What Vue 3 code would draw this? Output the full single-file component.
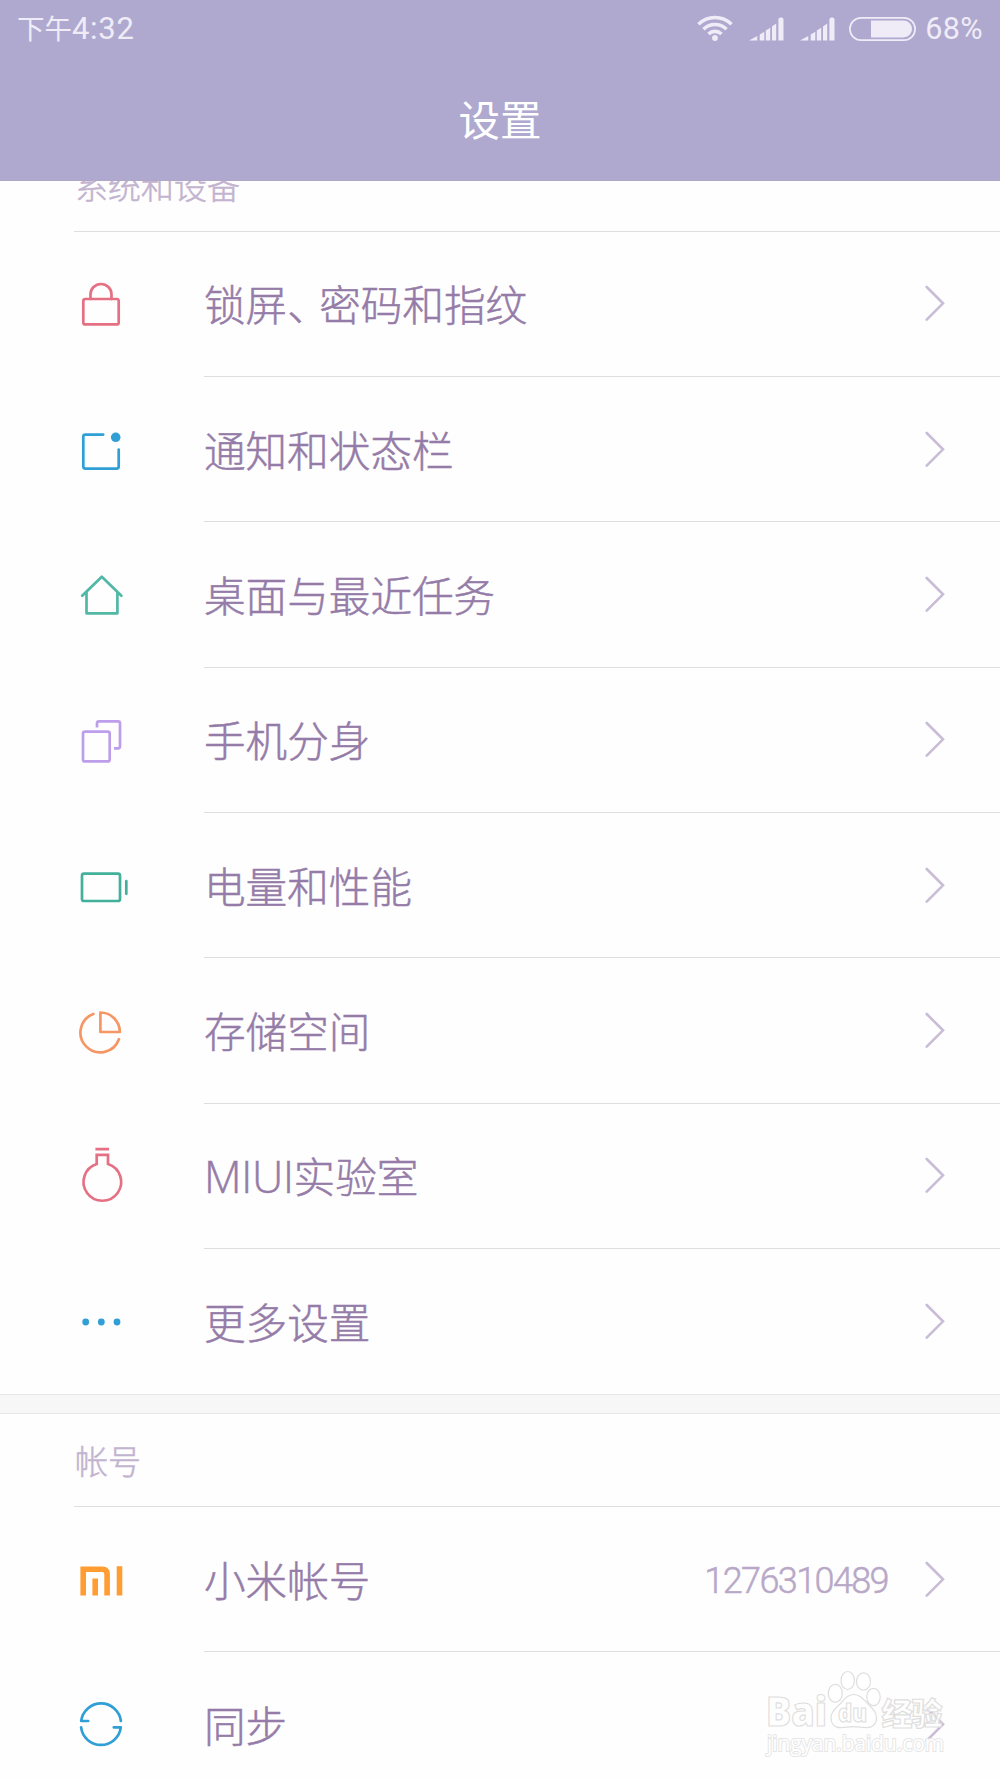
<script setup>
import { ref } from 'vue';

const deviceItems = ref([
  { icon: 'lock', before: '锁屏', pause: '、', title: '密码和指纹' },
  { icon: 'notify', title: '通知和状态栏' },
  { icon: 'home', title: '桌面与最近任务' },
  { icon: 'clone', title: '手机分身' },
  { icon: 'battery', title: '电量和性能' },
  { icon: 'storage', title: '存储空间' },
  { icon: 'lab', latin: 'MIUI', title: '实验室' },
  { icon: 'more', title: '更多设置' },
]);

const accountItems = ref([
  { icon: 'mi', title: '小米帐号', value: '1276310489' },
  { icon: 'sync', title: '同步' },
]);

const sections = [
  { name: '系统和设备', items: deviceItems },
  { name: '帐号', items: accountItems },
];
</script>

<template>
  <div class="screen">
    <header class="top">
      <div class="status-bar">
        <div class="clock"><span class="clock-period">下午</span>4:32</div>
        <div class="status-icons">
          <svg class="wifi" width="36" height="26" viewBox="0 0 36 26">
            <g fill="none" stroke="currentColor" stroke-width="3.6">
              <path d="M1.5 9.2a23.5 23.5 0 0 1 33 0" />
              <path d="M6.5 14.2a16.4 16.4 0 0 1 23 0" />
              <path d="M11.5 19a9.4 9.4 0 0 1 13 0" />
            </g>
            <circle cx="18" cy="23" r="2.9" fill="currentColor" />
          </svg>
          <svg v-for="n in 2" :key="n" class="signal" width="35" height="24" viewBox="0 0 35 24">
            <path
              d="M0 23.5 8.3 19v4.5zM10.7 17.6l4.6-2.8v8.7h-4.6zM16.8 13.6l4.4-2.9v12.8h-4.4zM23 9.4l4.2-2.9v17H23zM29.4 5V2.6q0-2.1 2.1-2.1h.9q2.1 0 2.1 2.1v20.9h-5.1z"
              fill="currentColor"
            />
          </svg>
          <svg class="charge" width="67" height="24" viewBox="0 0 67 24">
            <rect x=".9" y=".9" width="65.2" height="22.2" rx="11.1" fill="none" stroke="currentColor" stroke-width="1.7" />
            <path d="M22 3.5h32.5a8.5 8.5 0 0 1 0 17H22z" fill="currentColor" />
          </svg>
          <span class="percent">68%</span>
        </div>
      </div>
      <h1>设置</h1>
    </header>

    <main>
      <section v-for="section in sections" :key="section.name">
        <h2>{{ section.name }}</h2>
        <ul>
          <li v-for="item in section.items.value" :key="item.icon" class="row">
            <svg class="icon" :class="`icon-${item.icon}`" width="56" height="60" viewBox="0 0 56 60">
              <template v-if="item.icon === 'lock'">
                <rect x="7.3" y="26" width="35.4" height="25.4" rx="2" />
                <path d="M14.5 26v-4.5a10.5 10.5 0 0 1 21 0V26" />
              </template>
              <template v-else-if="item.icon === 'notify'">
                <path d="M27.2 15.6H9.3q-2 0-2 2v30q0 2 2 2h31.4q2 0 2-2v-17" />
                <circle class="solid" cx="39.7" cy="18.3" r="4.8" />
              </template>
              <path
                v-else-if="item.icon === 'home'"
                d="M6.2 31.8 25.8 12.7 45.4 31.8M10.5 28v21.3h30.9V28"
              />
              <template v-else-if="item.icon === 'clone'">
                <rect x="7" y="22.7" width="26.7" height="29.7" rx="2" />
                <path class="butt" d="M21 18.6v-4.3q0-2 2-2h19q2 0 2 2v23q0 2-2 2h-4" />
              </template>
              <template v-else-if="item.icon === 'battery'">
                <rect x="6" y="18.7" width="38" height="27.3" rx="2" />
                <path d="M50.3 26v12.8" />
              </template>
              <template v-else-if="item.icon === 'storage'">
                <path d="M17.3 14a19.8 19.8 0 1 0 25.6 25.2" />
                <path class="butt" d="M24.4 12.5V32h19.4a19.4 19.4 0 0 0-19.4-19.5z" />
              </template>
              <path
                v-else-if="item.icon === 'lab'"
                class="butt"
                d="M19.4 4.2h13.7M20.7 19V9.8H32V19a18.8 18.8 0 1 1-11.3 0z"
              />
              <template v-else-if="item.icon === 'more'">
                <circle v-for="cx in [9.7, 25.3, 41]" :key="cx" class="solid" :cx="cx" cy="31" r="3.4" />
              </template>
              <path
                v-else-if="item.icon === 'mi'"
                d="M7.2 46.4V20.2h19q4.9 0 4.9 4.9v21.3M19.2 29.4v17M43.5 17.3v29.1"
              />
              <path
                v-else-if="item.icon === 'sync'"
                d="M12.2 27H5.2a20 20 0 0 1 39.7 0M37.8 33.4h7a20 20 0 0 1-39.7 0"
              />
            </svg>
            <span class="title">
              <template v-if="item.before">{{ item.before }}<span class="pause">{{ item.pause }}</span></template>
              <span v-if="item.latin" class="latin">{{ item.latin }}</span>{{ item.title }}
            </span>
            <span v-if="item.value" class="value">{{ item.value }}</span>
            <svg class="chevron" width="20" height="36" viewBox="0 0 20 36">
              <path d="M1.700 2 18 18.300 1.700 34.600" />
            </svg>
          </li>
        </ul>
      </section>
    </main>

    <svg class="watermark" width="190" height="94" viewBox="0 0 190 94">
      <ellipse cx="70.3" cy="24.3" rx="7" ry="9" />
      <ellipse cx="82.7" cy="11.5" rx="6.7" ry="9" />
      <ellipse cx="98.500" cy="12.500" rx="7" ry="8.700" />
      <ellipse cx="108.500" cy="28" rx="6.700" ry="8.700" />
      <path d="M88.500 25.500c7 0 10 5 15 10s8 8 8 13.500c0 6.500-4.500 9.700-10 9.700-4.500 0-8-1-13-1s-8 1-12.500 1c-6 0-10-3.700-10-10.200 0-5 4-9 8-12.500s7-10.500 14.500-10.500z" />
      <text class="word" x="1" y="57" font-size="41" textLength="61" lengthAdjust="spacingAndGlyphs">Bai</text>
      <text class="word" x="73" y="53" font-size="25" textLength="29" lengthAdjust="spacingAndGlyphs">du</text>
      <text class="cjk" x="116.500" y="55.500" font-size="31" textLength="61">经验</text>
      <text class="url" x="2" y="81.500" font-size="21" textLength="177" lengthAdjust="spacingAndGlyphs">jingyan.baidu.com</text>
    </svg>
  </div>
</template>

<style>
body {
  margin: 0;
  background: #fefefe;
}
</style>

<style scoped>
.screen {
  position: relative;
  height: 1778px;
  overflow: hidden;
  background: #fefefe;
  color: #957ca8;
  font-family: 'Noto Sans CJK SC', sans-serif;
  font-weight: 300;
}

.top {
  position: relative;
  z-index: 1;
  box-sizing: border-box;
  height: 181px;
  background: #afa9d0;
  border-bottom: 1px solid #b0a6c6;
}

.status-bar {
  display: flex;
  align-items: center;
  justify-content: space-between;
  height: 57px;
  padding: 0 17px;
  color: #efecf7;
  font-family: Roboto, 'Noto Sans CJK SC', sans-serif;
  font-size: 31px;
  font-weight: 400;
  line-height: 57px;
}

.clock {
  letter-spacing: 0.7px;
}

.clock-period {
  font-size: 27.5px;
  letter-spacing: 0;
}

.status-icons {
  display: flex;
  align-items: center;
}

.wifi {
  margin-bottom: 2px;
}

.signal {
  margin-left: 16px;
}

.charge {
  margin-left: 14px;
}

.percent {
  margin-left: 9px;
  font-size: 30.5px;
  letter-spacing: 0.4px;
}

h1 {
  margin: -1px 0 0;
  color: #fff;
  font-size: 41.5px;
  font-weight: 400;
  line-height: 124px;
  text-align: center;
}

/* the list is scrolled a little way under the header */
main {
  margin-top: -42.33px;
}

section + section {
  margin-top: 0.67px;
  border-top: 1px solid #e6e6e6;
}

section + section::before {
  content: '';
  display: block;
  height: 18px;
  background: #f7f7f7;
  border-bottom: 1px solid #e6e6e6;
}

h2 {
  margin: 0 0 0 75px;
  height: 92px;
  color: #c2b3cf;
  font-size: 33px;
  font-weight: 300;
  line-height: 92px;
  -webkit-text-stroke: 0.5px;
}

ul {
  margin: 0;
  padding: 0;
  list-style: none;
}

.row {
  position: relative;
  display: flex;
  align-items: center;
  box-sizing: border-box;
  height: 145.33px;
  padding: 0 55px 0 76px;
}

.row::before {
  content: '';
  position: absolute;
  top: 0;
  left: 204px;
  right: 0;
  height: 1px;
  background: #dedede;
}

.row:first-child::before {
  left: 74px;
}

.icon {
  fill: none;
  stroke: currentColor;
  stroke-width: 2.7;
  stroke-linecap: round;
  stroke-linejoin: round;
}

.icon .solid {
  fill: currentColor;
  stroke: none;
}

.icon .butt {
  stroke-linecap: butt;
}

.icon-lock,
.icon-lab {
  color: #e57083;
}

.icon-lab {
  stroke-linejoin: miter;
}

.icon-notify,
.icon-more,
.icon-sync {
  color: #309fd6;
}

.icon-home {
  color: #52b8a6;
}

.icon-clone {
  color: #bd9eea;
}

.icon-battery {
  color: #42b09b;
}

.icon-storage {
  color: #f59664;
}

.icon-mi {
  color: #ff9c32;
  stroke-width: 5.6;
  stroke-linecap: butt;
  stroke-linejoin: miter;
}

.title {
  flex: 1;
  margin-left: 72px;
  font-size: 41.6px;
  line-height: 60px;
  white-space: nowrap;
  -webkit-text-stroke: 0.5px;
}

.pause {
  margin-right: 11.2px;
  font-feature-settings: 'halt';
}

.latin {
  font-family: 'Open Sans', sans-serif;
  font-size: 43.5px;
  letter-spacing: -0.3px;
  line-height: 1;
}

.value {
  margin: 4px 37px 0 0;
  color: #b8a8c8;
  font-family: Roboto, sans-serif;
  font-size: 36px;
  letter-spacing: -1.6px;
  -webkit-text-stroke: 0.5px;
}

.chevron {
  fill: none;
  stroke: #c9bdd6;
  stroke-width: 2.6;
  stroke-linecap: round;
}

.watermark {
  position: absolute;
  left: 765px;
  top: 1669px;
  fill: rgba(255, 255, 255, 0.75);
  stroke: #dedede;
  stroke-width: 1.2;
}

.word {
  font-family: 'Open Sans', sans-serif;
  font-weight: 800;
}

.cjk {
  font-family: 'Noto Sans CJK SC', sans-serif;
  font-weight: 900;
}

.url {
  fill: #fff;
  font-family: 'Open Sans', sans-serif;
  font-weight: 400;
  stroke: #e6e6e6;
  stroke-width: 2;
  paint-order: stroke;
}
</style>
